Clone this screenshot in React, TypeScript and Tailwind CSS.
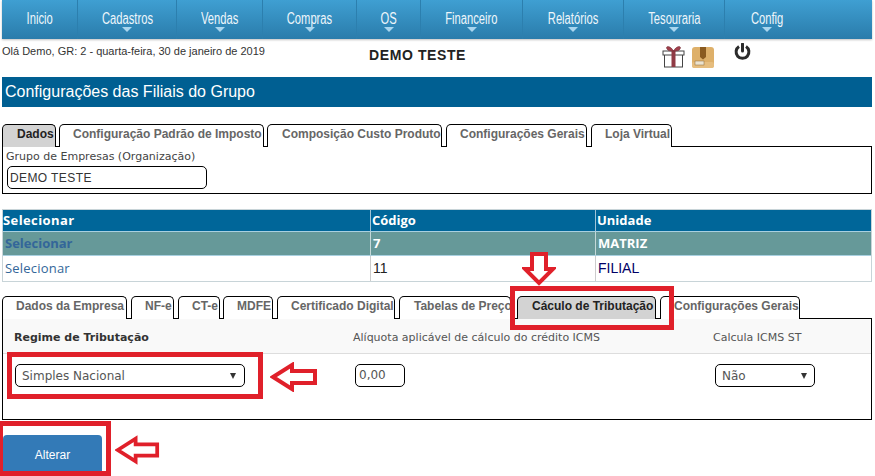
import React from "react";

const nav: [string, number, boolean][] = [
  ["Inicio", 76, false],
  ["Cadastros", 99, true],
  ["Vendas", 86, true],
  ["Compras", 94, true],
  ["OS", 64, true],
  ["Financeiro", 102, true],
  ["Relatórios", 101, true],
  ["Tesouraria", 101, true],
  ["Config", 84, true],
];

const arial = "font-['Liberation_Sans',Arial,sans-serif]";
const verdana = "font-['DejaVu_Sans',Verdana,sans-serif]";
const segoe = "font-['Open_Sans','Noto_Sans',sans-serif]";

function Tab({ label, w, active, pl, ml }: { label: string; w: string; active?: boolean; pl: string; ml: string }) {
  return (
    <div
      className={`${w} ${pl} ${ml} ${arial} h-[23px] shrink-0 rounded-t-[5px] border border-b-0 border-black text-[12px] font-bold leading-[19px] whitespace-nowrap overflow-hidden ${
        active ? "bg-[#d3d3d3] text-[#222222]" : "bg-white text-[#666666]"
      }`}
    >
      {label}
    </div>
  );
}

function LeftArrow({ className }: { className: string }) {
  return (
    <svg className={className} viewBox="0 0 48 30" fill="none">
      <path d="M3 15 L22 3 L22 9 L45 9 L45 21 L22 21 L22 27 Z" fill="#fff" stroke="#e0202a" strokeWidth="4" strokeLinejoin="miter" />
    </svg>
  );
}

export default function App() {
  return (
    <div className={`relative w-[875px] h-[476px] overflow-hidden bg-white ${arial}`}>
      {/* top menu */}
      <div className="ml-[2px] w-[870px] h-[39px] flex bg-gradient-to-b from-[#3f9fd2] to-[#2a7cab] shadow-[0_1px_2px_rgba(0,0,0,0.25)]">
        {nav.map(([label, w, caret], i) => (
          <div
            key={label}
            style={{ width: w }}
            className={`relative shrink-0 flex justify-center pt-[11px] text-[#eef6fb] text-[16px] leading-[16px] ${
              i < 8 ? "border-r border-[#2c7fae]" : ""
            }`}
          >
            <span className="inline-block scale-x-[0.7]">{label}</span>
            {caret && (
              <span className="absolute left-1/2 -translate-x-1/2 top-[27px] w-0 h-0 border-x-[5px] border-x-transparent border-t-[5px] border-t-[#a9d6ef]" />
            )}
          </div>
        ))}
      </div>

      {/* greeting row */}
      <div className="h-[38px] flex relative">
        <div className="pl-[2px] pt-[6px] w-[369px] text-[11px] leading-[12px] text-[#333333]">
          Olá Demo, GR: 2 - quarta-feira, 30 de janeiro de 2019
        </div>
        <div className="pt-[8px] w-[293px] text-[14px] leading-[16px] tracking-[0.6px] font-bold text-[#222222]">DEMO TESTE</div>
        <svg className="mt-[6px] w-[23px] h-[23px]" viewBox="0 0 23 23">
          <rect x="2.5" y="8" width="18" height="14" fill="#fff" stroke="#444" strokeWidth="1" />
          <rect x="1" y="6" width="21" height="4" fill="#fff" stroke="#444" strokeWidth="1" />
          <rect x="9.5" y="6" width="4" height="16" fill="#8f3a45" />
          <path d="M11.5 6 C8 0 3 1 5 4 C6 6 9 6 11.5 6 C14 6 17 6 18 4 C20 1 15 0 11.5 6Z" fill="#a2414d" stroke="#6f2a33" strokeWidth="0.6" />
        </svg>
        <svg className="ml-[7px] mt-[8px] w-[22px] h-[21px]" viewBox="0 0 22 21">
          <rect x="0" y="0" width="22" height="21" rx="3" fill="#deb06a" />
          <rect x="0" y="15" width="22" height="6" rx="2" fill="#e6bd7e" />
          <rect x="8" y="0" width="6" height="10" fill="#8a5a1f" />
          <path d="M8 10 L11 12.5 L14 10Z" fill="#8a5a1f" />
          <rect x="3" y="14" width="9" height="4" fill="#ece3d0" stroke="#8a6a3a" strokeWidth="0.5" />
        </svg>
        <svg className="ml-[20px] mt-[4px] w-[17px] h-[17px]" viewBox="0 0 17 17" fill="none" stroke="#2b2b2b" strokeWidth="3">
          <path d="M5 3.6 A6.4 6.4 0 1 0 12 3.6" />
          <path d="M8.5 1 V8" strokeLinecap="round" />
        </svg>
      </div>

      {/* title */}
      <div className="ml-[2px] w-[870px] h-[30px] bg-[#005f92] pl-[3px] pt-[5px] text-[16px] leading-[19px] text-white">
        Configurações das Filiais do Grupo
      </div>

      {/* first tabs */}
      <div className="mt-[17px] ml-[2px] flex relative z-10">
        <Tab label="Dados" w="w-[54px]" pl="pl-[14px]" ml="" active />
        <Tab label="Configuração Padrão de Imposto" w="w-[205px]" pl="pl-[13px]" ml="ml-[3px]" />
        <Tab label="Composição Custo Produto" w="w-[175px]" pl="pl-[14px]" ml="ml-[3px]" />
        <Tab label="Configurações Gerais" w="w-[141px]" pl="pl-[13px]" ml="ml-[4px]" />
        <Tab label="Loja Virtual" w="w-[81px]" pl="pl-[13px]" ml="ml-[4px]" />
      </div>
      <div className="ml-[2px] -mt-px w-[870px] h-[48px] border border-black pl-[3px] pt-[3px]">
        <div className={`${verdana} text-[11px] leading-[14px] text-[#444444]`}>Grupo de Empresas (Organização)</div>
        <div className="mt-[2px] ml-[1px] w-[200px] h-[23px] rounded-[5px] border border-black pl-[2px] text-[12px] leading-[22px] tracking-[0.4px] text-[#333333]">
          DEMO TESTE
        </div>
      </div>

      {/* table */}
      <div className="mt-[15px] ml-[2px] w-[870px] border border-[#c8d4d8]">
        <div className={`flex h-[21px] bg-[#006699] text-white text-[13px] font-bold leading-[20px] ${segoe}`}>
          <div className="w-[368px] border-r border-[#9fc3d6] tracking-[0.4px]">Selecionar</div>
          <div className="w-[225px] border-r border-[#9fc3d6] pl-px">Código</div>
          <div className="flex-1 pl-px">Unidade</div>
        </div>
        <div className={`flex h-[25px] bg-[#669999] border-y border-[#a8d0e0] text-[13px] font-bold leading-[23px] ${segoe}`}>
          <div className="w-[368px] border-r border-[#c4d8d8] pl-[2px] text-[#336699]">Selecionar</div>
          <div className="w-[225px] border-r border-[#c4d8d8] pl-[2px] text-white">7</div>
          <div className="flex-1 pl-[2px] text-white">MATRIZ</div>
        </div>
        <div className="flex h-[25px] bg-white text-[14px] leading-[24px]">
          <div className={`w-[368px] border-r border-[#cccccc] pl-[2px] text-[13px] text-[#336699] tracking-[0.2px] ${segoe}`}>Selecionar</div>
          <div className={`w-[225px] border-r border-[#cccccc] pl-[2px] text-[#222222] ${arial}`}>11</div>
          <div className={`flex-1 pl-[2px] text-[#000066] ${arial}`}>FILIAL</div>
        </div>
      </div>

      {/* second tabs */}
      <div className="mt-[14px] ml-[2px] flex relative z-10">
        <Tab label="Dados da Empresa" w="w-[125px]" pl="pl-[13px]" ml="" />
        <Tab label="NF-e" w="w-[43px]" pl="pl-[13px]" ml="ml-[4px]" />
        <Tab label="CT-e" w="w-[42px]" pl="pl-[13px]" ml="ml-[4px]" />
        <Tab label="MDFE" w="w-[50px]" pl="pl-[13px]" ml="ml-[3px]" />
        <Tab label="Certificado Digital" w="w-[118px]" pl="pl-[13px]" ml="ml-[4px]" />
        <Tab label="Tabelas de Preço" w="w-[112px]" pl="pl-[14px]" ml="ml-[4px]" />
        <Tab label="Cáculo de Tributação" w="w-[139px]" pl="pl-[14px]" ml="ml-[6px]" active />
        <Tab label="Configurações Gerais" w="w-[140px]" pl="pl-[13px]" ml="ml-[4px]" />
      </div>
      <div className="ml-[2px] -mt-px w-[870px] h-[102px] border border-black">
        <div className={`flex h-[35px] bg-[#f9f9f9] border-b border-[#dddddd] ${verdana} text-[11px] leading-[14px] text-[#555555] pt-[12px]`}>
          <div className="w-[350px] pl-[11px] font-bold text-[#333333]">Regime de Tributação</div>
          <div className="w-[360px]">Alíquota aplicável de cálculo do crédito ICMS</div>
          <div>Calcula ICMS ST</div>
        </div>
        <div className={`flex pt-[10px] ${verdana} text-[12px] text-[#555555]`}>
          <div className="ml-[12px] w-[230px] h-[23px] rounded-[5px] border border-black flex items-center justify-between pl-[6px] pr-[8px]">
            <span>Simples Nacional</span>
            <span className="w-0 h-0 border-x-[3px] border-x-transparent border-t-[6px] border-t-[#333333]" />
          </div>
          <div className="ml-[110px] w-[50px] h-[23px] rounded-[5px] border border-black pl-[3px] leading-[21px]">0,00</div>
          <div className="ml-[310px] w-[100px] h-[23px] rounded-[5px] border border-black flex items-center justify-between pl-[6px] pr-[7px]">
            <span>Não</span>
            <span className="w-0 h-0 border-x-[3px] border-x-transparent border-t-[6px] border-t-[#333333]" />
          </div>
        </div>
      </div>

      {/* button */}
      <div className="ml-[3px] mt-[15px] w-[99px] h-[44px] rounded-[4px] bg-[#337ab7] pt-[13px] text-center text-[12px] leading-[14px] text-white">
        Alterar
      </div>

      {/* red annotations */}
      <div className="absolute z-20 left-[510px] top-[286px] w-[164px] h-[44px] border-[5px] border-[#e0202a]" />
      <div className="absolute z-20 left-[7px] top-[352px] w-[256px] h-[47px] border-[5px] border-[#e0202a]" />
      <div className="absolute z-20 left-[-2px] top-[421px] w-[113px] h-[55px] border-[5px] border-[#e0202a]" />
      <svg className="absolute z-20 left-[522px] top-[251px] w-[34px] h-[35px]" viewBox="0 0 34 35" fill="none">
        <path d="M10 3 H24 V18 H31 L17 32 L3 18 H10 Z" fill="#fff" stroke="#e0202a" strokeWidth="4" />
      </svg>
      <LeftArrow className="absolute z-20 left-[270px] top-[362px] w-[48px] h-[30px]" />
      <LeftArrow className="absolute z-20 left-[115px] top-[434px] w-[45px] h-[32px]" />
    </div>
  );
}
